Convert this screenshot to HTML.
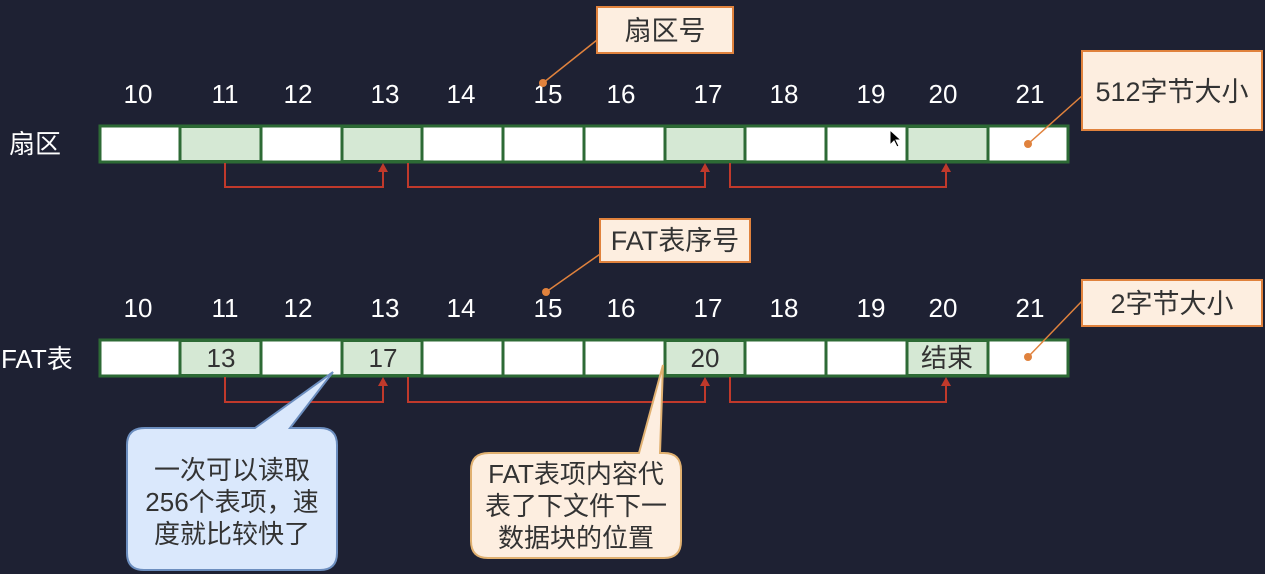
<!DOCTYPE html>
<html><head><meta charset="utf-8"><style>
html,body{margin:0;padding:0;background:#1e2133;}
svg{display:block}
text{font-family:"Liberation Sans","Noto Sans CJK SC",sans-serif;}
</style></head><body>
<svg width="1265" height="574" viewBox="0 0 1265 574" xmlns="http://www.w3.org/2000/svg">
<rect width="1265" height="574" fill="#1e2133"/>
<g id="row1">
<rect x="100" y="126" width="968" height="36" fill="#fff" stroke="#2d6a35" stroke-width="3"/>
<g fill="#d5e8d4" stroke="#2d6a35" stroke-width="2">
<rect x="180" y="127" width="81" height="34"/><rect x="342" y="127" width="80" height="34"/>
<rect x="665" y="127" width="80" height="34"/><rect x="907" y="127" width="81" height="34"/>
</g>
<g stroke="#2d6a35" stroke-width="3"><path d="M180 126v36M261 126v36M342 126v36M422 126v36M503 126v36M584 126v36M665 126v36M745 126v36M826 126v36M907 126v36M988 126v36"/></g>
</g>
<use href="#row1" y="214"/>
<g fill="#fff" font-size="26" text-anchor="middle">
<text x="138" y="103">10</text><text x="225" y="103">11</text><text x="298" y="103">12</text><text x="385" y="103">13</text><text x="461" y="103">14</text><text x="548" y="103">15</text><text x="621" y="103">16</text><text x="708" y="103">17</text><text x="784" y="103">18</text><text x="871" y="103">19</text><text x="943" y="103">20</text><text x="1030" y="103">21</text>
<text x="138" y="317">10</text><text x="225" y="317">11</text><text x="298" y="317">12</text><text x="385" y="317">13</text><text x="461" y="317">14</text><text x="548" y="317">15</text><text x="621" y="317">16</text><text x="708" y="317">17</text><text x="784" y="317">18</text><text x="871" y="317">19</text><text x="943" y="317">20</text><text x="1030" y="317">21</text>
</g>
<g fill="#fff" font-size="26">
<text x="9" y="153">扇区</text><text x="1" y="368">FAT表</text>
</g>
<g fill="#333" font-size="26" text-anchor="middle">
<text x="221" y="367">13</text><text x="383" y="367">17</text><text x="705" y="367">20</text><text x="947" y="367">结束</text>
</g>
<g fill="none" stroke="#c0392b" stroke-width="2">
<path d="M225 163v24h158v-20M408 163v24h297v-20M730 163v24h216v-20"/>
<path d="M225 377v25h158v-20M408 377v25h297v-20M730 377v25h216v-20"/>
</g>
<g fill="#c0392b">
<path d="M378 172l5-9 5 9z M700 172l5-9 5 9z M941 172l5-9 5 9z"/>
<path d="M378 386l5-9 5 9z M700 386l5-9 5 9z M941 386l5-9 5 9z"/>
</g>
<g stroke="#e0823d" stroke-width="1.5" fill="none">
<path d="M597 40L543 83M1083 95L1028 144M603 252L546 292M1083 300L1028 357"/>
</g>
<g fill="#e0823d"><circle cx="543" cy="83" r="4"/><circle cx="1028" cy="144" r="4"/><circle cx="546" cy="292" r="4"/><circle cx="1028" cy="357" r="4"/></g>
<g fill="#fdeee0" stroke="#e0823d" stroke-width="2">
<rect x="597" y="7" width="136" height="46"/><rect x="1082" y="51" width="180" height="79"/>
<rect x="600" y="219" width="150" height="43"/><rect x="1082" y="280" width="180" height="46"/>
</g>
<g fill="#333" font-size="27" text-anchor="middle">
<text x="665" y="40">扇区号</text><text x="1172" y="101">512字节大小</text>
<text x="675" y="250">FAT表序号</text><text x="1172" y="313">2字节大小</text>
</g>
<path d="M145 428H255L333 372L290 428H320Q337 428 337 445V553Q337 570 320 570H144Q127 570 127 553V445Q127 428 145 428Z" fill="#dae8fc" stroke="#6c8ebf" stroke-width="2"/>
<path d="M489 453H639L663 365L660 453H664Q681 453 681 470V541Q681 558 664 558H488Q471 558 471 541V470Q471 453 489 453Z" fill="#fdeee0" stroke="#e0b070" stroke-width="2"/>
<g fill="#333" font-size="26" text-anchor="middle">
<text x="232" y="479">一次可以读取</text><text x="232" y="511">256个表项，速</text><text x="232" y="543">度就比较快了</text>
<text x="576" y="483">FAT表项内容代</text><text x="576" y="515">表了下文件下一</text><text x="576" y="547">数据块的位置</text>
</g>
<path d="M890 130v15l4-4 3 6 2-1-3-6h5z" fill="#000" stroke="#fff" stroke-width="1"/>
</svg>
</body></html>
